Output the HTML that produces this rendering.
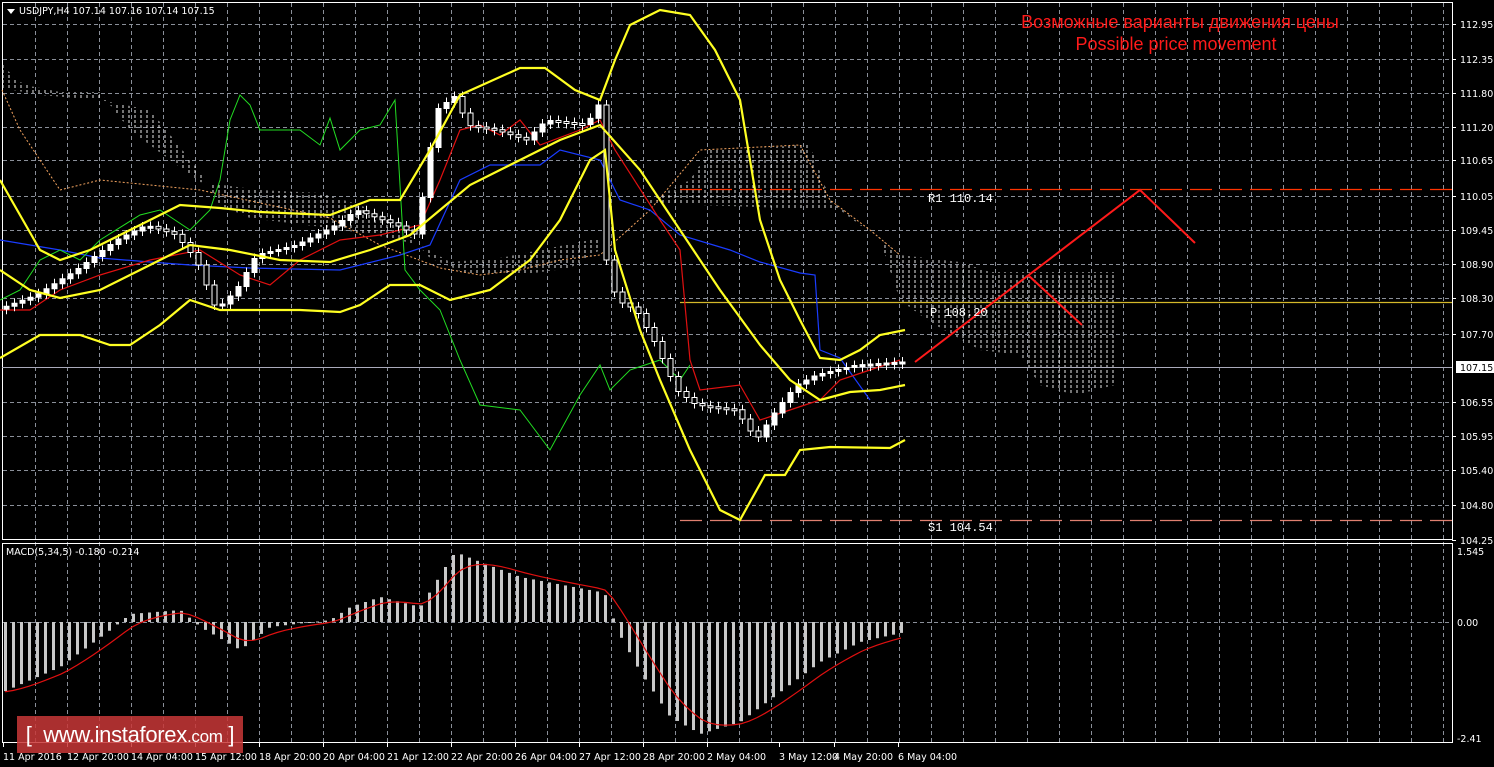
<!DOCTYPE html>
<html><head><meta charset="utf-8"><style>
html,body{margin:0;padding:0;background:#000;width:1494px;height:767px;overflow:hidden;font-family:"Liberation Sans",sans-serif}
svg{position:absolute;left:0;top:0}
.ax{font-family:"DejaVu Sans","Liberation Sans",sans-serif;font-size:9.5px;fill:#fff}
.lbl{font-family:"Liberation Mono",monospace;font-size:12px;fill:#fff}
#logo{position:absolute;left:17px;top:716px;width:226px;height:37px;background:rgba(200,55,55,0.85);color:#fff;font-size:22px;line-height:37px;text-align:center;letter-spacing:-0.3px}
</style></head><body>
<svg id="s" width="1494" height="767" xmlns="http://www.w3.org/2000/svg">
<defs>
<pattern id="hatch" width="6" height="5" patternUnits="userSpaceOnUse"><line x1="3" y1="0" x2="3" y2="3" stroke="#e8e8e8" stroke-width="1"/></pattern>
</defs>
<g id="grid" stroke="#8a8f99" stroke-dasharray="4,3" stroke-width="1"></g>
<rect x="2.5" y="2.5" width="1450" height="537" fill="none" stroke="#fff"/>
<rect x="2.5" y="543.5" width="1450" height="199" fill="none" stroke="#fff"/>
<polygon fill="url(#hatch)" points="2,62 12,76 20,82 30,86 60,92 100,92 130,130 170,160 200,182 260,190 320,193 360,205 400,225 430,258 470,275 520,275 570,268 600,250 600,238 560,246 500,258 450,262 420,245 380,236 330,228 250,218 220,205 200,172 150,110 100,100 40,95 2,88"/>
<polygon fill="url(#hatch)" points="640,205 690,180 710,150 760,148 800,145 810,145 830,200 870,230 900,255 960,262 990,272 1115,272 1115,385 1075,395 1040,385 1020,355 980,350 930,322 900,300 880,240 840,210 700,205"/>
<polyline fill="none" stroke="#f4a460" stroke-width="1" stroke-dasharray="2,2" points="2,90 20,130 60,190 100,180 200,190 330,218 380,245 440,268 480,275 520,270 560,260 600,255 650,210 700,150 800,145 830,200 870,230 900,255"/>
<line x1="2" y1="367.5" x2="1452" y2="367.5" stroke="#aab" stroke-width="1"/>
<line x1="680" y1="302.5" x2="1452" y2="302.5" stroke="#d4b82a" stroke-width="1.3"/>
<line x1="680" y1="189.5" x2="1452" y2="189.5" stroke="#ff3300" stroke-width="1.3" stroke-dasharray="22,8"/>
<line x1="680" y1="520.5" x2="1452" y2="520.5" stroke="#e08070" stroke-width="1.2" stroke-dasharray="22,8"/>
<polyline fill="none" stroke="#1a3cff" stroke-width="1.2" points="0,240 60,250 100,258 150,262 190,265 250,268 340,270 400,255 430,245 460,180 490,165 540,165 560,150 600,160 620,200 650,210 680,235 730,250 760,262 800,273 815,275 820,350 840,358 870,400"/>
<polyline fill="none" stroke="#e01010" stroke-width="1.2" points="0,310 30,310 60,290 100,275 150,260 200,250 240,275 270,285 300,260 340,240 380,235 420,225 440,180 460,130 480,125 500,135 520,120 540,145 580,130 600,120 615,150 660,220 680,250 690,360 700,390 740,385 760,420 790,410 820,400 840,380 870,370 900,360"/>
<polyline fill="none" stroke="#22dd22" stroke-width="1" points="0,300 20,290 40,260 60,250 80,260 100,240 140,215 160,210 190,230 210,210 220,180 230,120 240,95 250,105 260,130 300,130 320,145 330,118 340,150 360,130 380,125 395,100 405,270 420,290 440,310 460,360 480,405 520,410 550,450 580,395 600,365 610,390 630,370 660,360 680,380 690,365"/>
<g id="candles"></g>
<g fill="none" stroke="#ffff22" stroke-width="2.2">
<polyline points="0,180 20,215 40,250 60,260 90,250 130,230 180,205 220,208 260,212 330,215 370,200 400,200 430,150 460,95 520,68 545,68 575,90 600,100 615,60 630,25 660,10 690,15 715,50 740,100 760,220 780,280 800,320 820,358 840,360 860,350 880,335 905,330"/>
<polyline points="0,270 30,290 60,298 100,290 150,265 190,245 230,250 280,260 330,262 370,250 410,235 440,210 470,185 520,160 560,140 600,125 640,170 680,230 720,290 760,345 790,380 820,400 850,392 880,390 905,385"/>
<polyline points="0,358 40,335 80,335 110,345 130,345 160,325 190,300 220,310 300,310 340,312 360,305 390,285 420,285 450,300 490,290 530,260 560,220 590,160 605,150 615,250 640,330 660,380 690,450 720,510 740,520 765,475 785,475 800,450 830,447 890,448 905,440"/>
</g>
<polyline fill="none" stroke="#ff1a1a" stroke-width="2" points="915,362 1140,190 1195,243"/>
<polyline fill="none" stroke="#ff1a1a" stroke-width="2" points="1028,275 1082,325"/>
<text class="lbl" x="928" y="202">R1 110.14</text>
<text class="lbl" x="930" y="316">P 108.20</text>
<text class="lbl" x="928" y="531">S1 104.54</text>
<text x="1180" y="28" fill="#ff1a1a" font-size="18" text-anchor="middle" font-family="Liberation Sans,sans-serif">Возможные варианты движения цены</text>
<text x="1176" y="50" fill="#ff1a1a" font-size="18" text-anchor="middle" font-family="Liberation Sans,sans-serif">Possible price movement</text>
<polygon points="7,9 15,9 11,14" fill="#fff"/>
<text x="19" y="14" class="ax">USDJPY,H4  107.14 107.16 107.14 107.15</text>
<text x="6" y="555" class="ax">MACD(5,34,5) -0.180 -0.214</text>
<g id="macd"></g>
<g id="axis"></g>
<rect x="1456" y="361" width="38" height="12" fill="#fff"/>
<text x="1460" y="371" font-size="9.5" fill="#000" font-family="DejaVu Sans,sans-serif">107.15</text>
</svg>
<div id="logo">[&nbsp; www.instaforex<span style="font-size:17px">.com</span> ]</div>
<script>
(function(){
var NS="http://www.w3.org/2000/svg";
function el(p,t,a){var e=document.createElementNS(NS,t);for(var k in a)e.setAttribute(k,a[k]);p.appendChild(e);return e;}
var g=document.getElementById('grid');
for(var x=35;x<1452;x+=32)el(g,'line',{x1:x+.5,y1:3,x2:x+.5,y2:742});
var ys=[24,59,93,127,160,196,230,264,298,334,402,436,470,505];
ys.forEach(function(y){el(g,'line',{x1:3,y1:y+.5,x2:1452,y2:y+.5});});
el(g,'line',{x1:3,y1:622.5,x2:1452,y2:622.5});
var ax=document.getElementById('axis');
var pl=[["112.95",24],["112.35",59],["111.80",93],["111.20",127],["110.65",160],["110.05",196],["109.45",230],["108.90",264],["108.30",298],["107.70",334],["106.55",402],["105.95",436],["105.40",470],["104.80",505],["104.25",540]];
pl.forEach(function(p){el(ax,'text',{x:1460,y:p[1]+4,'class':'ax'}).textContent=p[0];el(ax,'line',{x1:1452,y1:p[1]+.5,x2:1456,y2:p[1]+.5,stroke:'#fff'});});
[["1.545",555],["0.00",626],["-2.41",742]].forEach(function(p){el(ax,'text',{x:1457,y:p[1],'class':'ax'}).textContent=p[0];});
var tl=["11 Apr 2016","12 Apr 20:00","14 Apr 04:00","15 Apr 12:00","18 Apr 20:00","20 Apr 04:00","21 Apr 12:00","22 Apr 20:00","26 Apr 04:00","27 Apr 12:00","28 Apr 20:00","2 May 04:00","3 May 12:00","4 May 20:00","6 May 04:00"];
tl.forEach(function(t,i){var x=3+i*64;if(i==12)x=779;if(i==13)x=834;if(i==14)x=898;el(ax,'text',{x:x,y:760,'class':'ax'}).textContent=t;el(ax,'line',{x1:x+.5,y1:743,x2:x+.5,y2:747,stroke:'#fff'});});
var pp=[[0,310],[40,295],[80,270],[120,240],[150,225],[180,235],[200,260],[220,310],[240,290],[260,255],[300,245],[340,225],[360,210],[400,225],[420,235],[440,110],[460,95],[470,125],[500,130],[530,140],[550,120],[590,125],[605,100],[610,260],[620,300],[640,310],[660,345],[680,390],[700,405],[740,410],[760,440],[780,410],[800,385],[820,375],[860,365],[905,362]];
function py(x){for(var i=1;i<pp.length;i++)if(x<=pp[i][0]){var a=pp[i-1],b=pp[i];return a[1]+(b[1]-a[1])*(x-a[0])/(b[0]-a[0]);}return 362;}
var cg=document.getElementById('candles');
for(var x=6;x<905;x+=8){var o=py(x-4),c=py(x+4);var tp=Math.min(o,c),h=Math.max(Math.abs(o-c),2);
el(cg,'line',{x1:x+.5,y1:tp-5,x2:x+.5,y2:tp+h+5,stroke:'#fff'});
el(cg,'rect',{x:x-2,y:tp,width:5,height:h,fill:c<o?'#fff':'#000',stroke:'#fff','stroke-width':1});}
var mv=[[3,-70],[60,-45],[110,-8],[130,8],[180,12],[200,-5],[240,-28],[270,-5],[330,2],[350,15],[380,25],[420,15],[445,55],[455,70],[480,60],[520,45],[600,30],[608,25],[615,-5],[640,-50],[670,-95],[700,-112],[740,-100],[780,-70],[820,-40],[860,-20],[905,-10]];
function mvf(x){for(var i=1;i<mv.length;i++)if(x<=mv[i][0]){var a=mv[i-1],b=mv[i];return a[1]+(b[1]-a[1])*(x-a[0])/(b[0]-a[0]);}return -10;}
var mg=document.getElementById('macd');var sig=[];var s=-70;
for(var x=5;x<908;x+=8){var v=mvf(x);s=s+(v-s)*0.3;sig.push(x+','+(622-s));
el(mg,'rect',{x:x-1,y:v>0?622-v:622,width:3,height:Math.max(Math.abs(v),1),fill:'#c8c8c8'});}
el(mg,'polyline',{points:sig.join(' '),fill:'none',stroke:'#e01010','stroke-width':1.2});
})();
</script>
</body></html>
